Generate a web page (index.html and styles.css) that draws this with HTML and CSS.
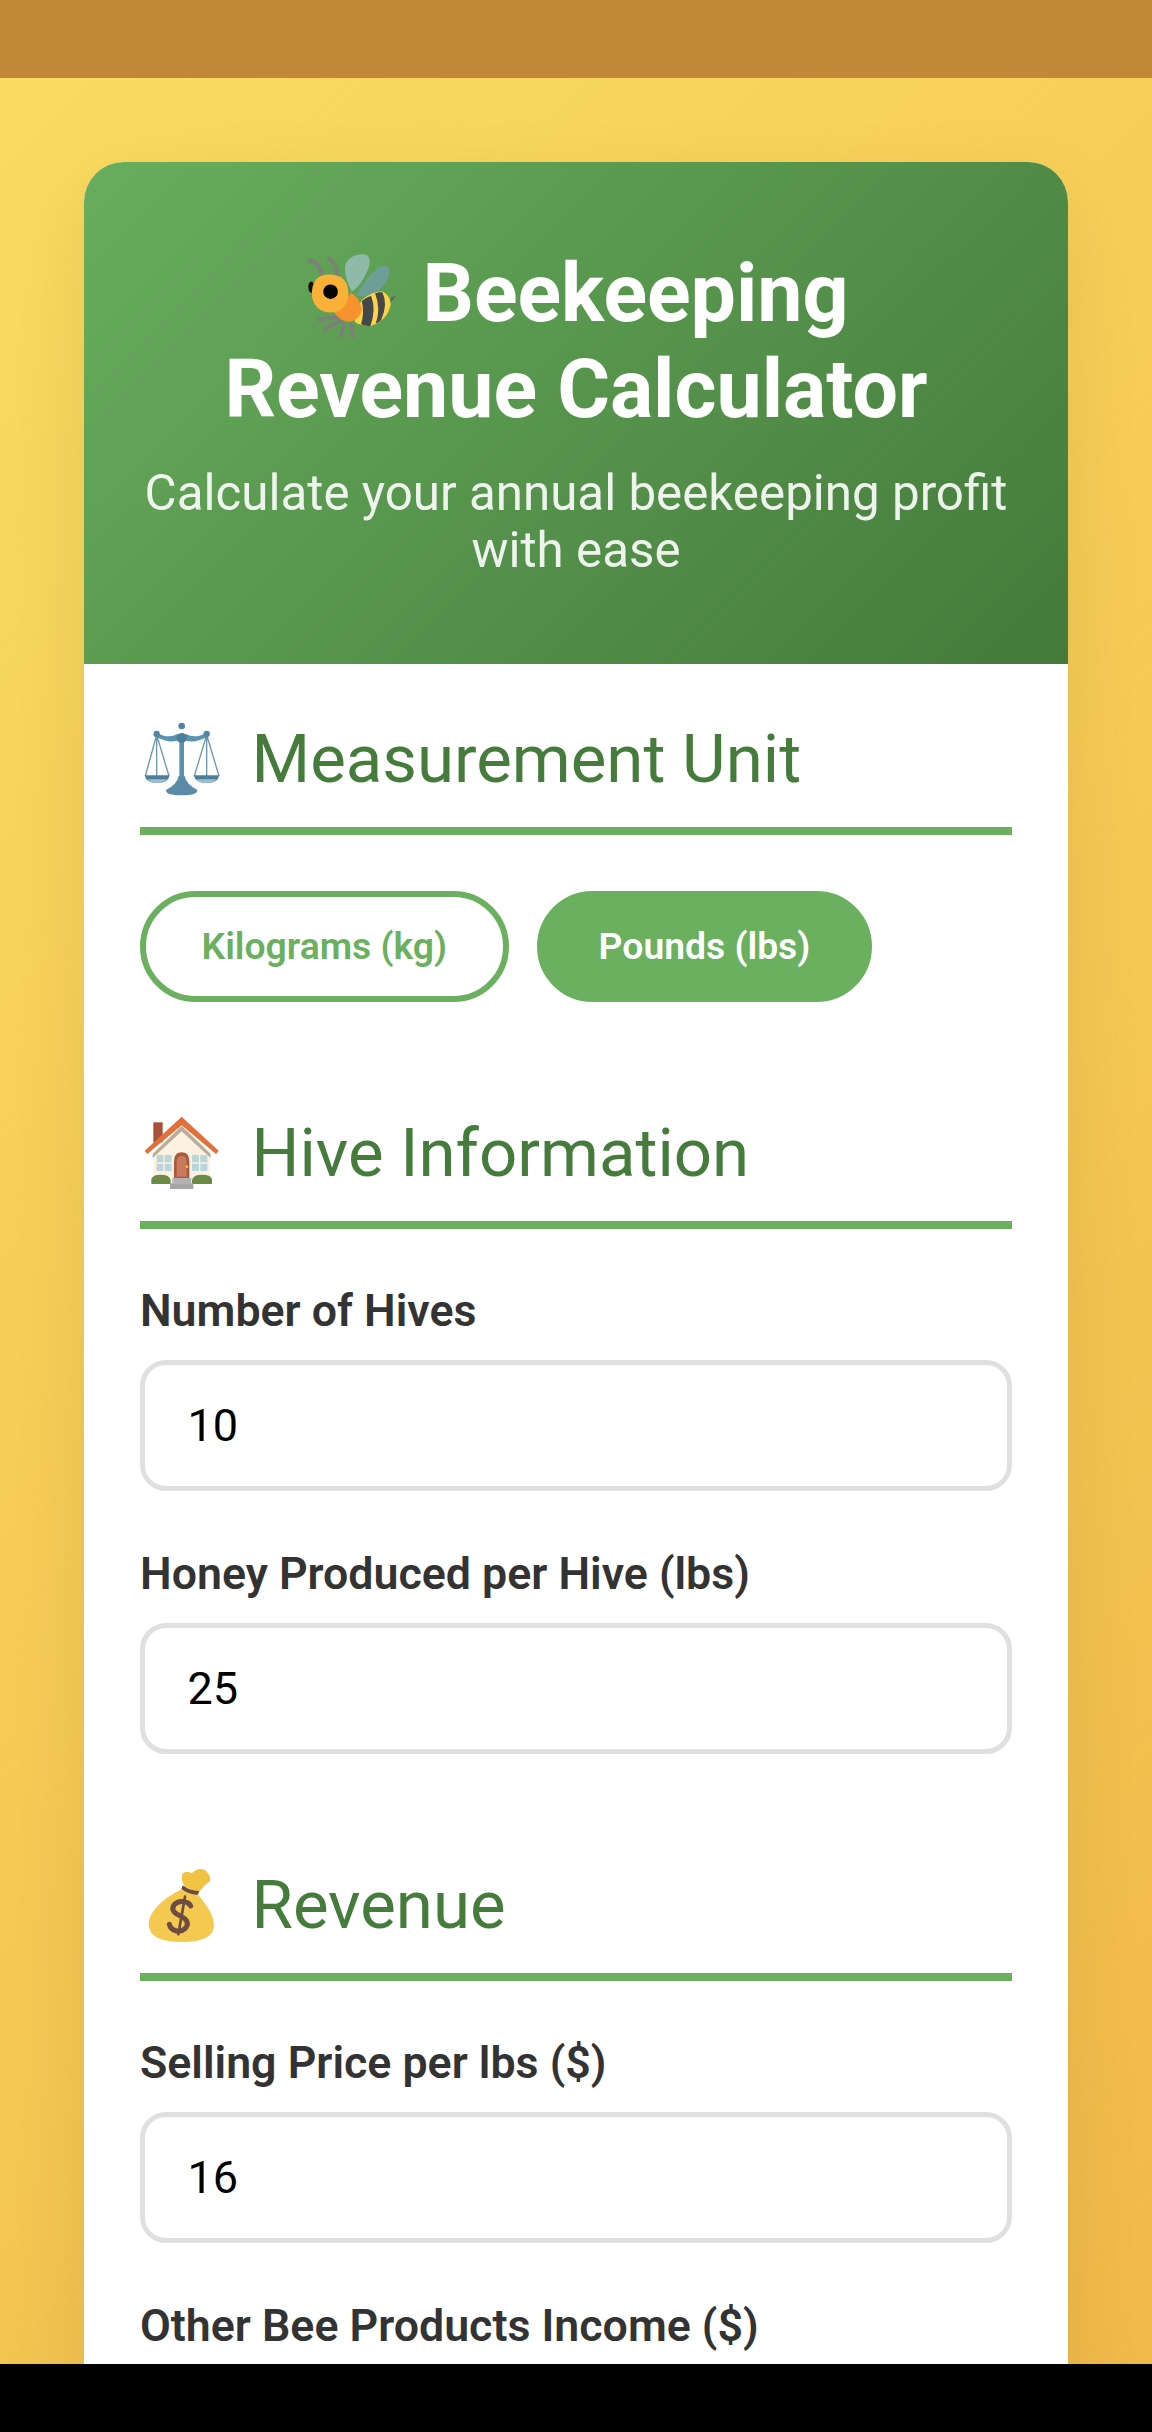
FILE: index.html
```html
<!DOCTYPE html>
<html lang="en">
<head>
<meta charset="utf-8">
<title>Beekeeping Revenue Calculator</title>
<link rel="stylesheet" href="styles.css">
</head>
<body>
<div class="status-bar"></div>
<main class="page">
  <div class="card">
    <header class="hero">
      <h1><svg class="emoji-bee" viewBox="80 60 280 270" aria-hidden="true">
        <g class="leg">
          <path d="M175 150 Q172 90 148 82"/><path d="M128 132 Q122 92 90 88"/>
          <path d="M172 260 L118 266"/><path d="M182 270 L135 296"/><path d="M195 276 L185 316"/><path d="M215 280 L222 316"/>
        </g>
        <path d="M218 182 Q190 130 200 95 Q225 62 265 72 Q280 90 262 125 Q245 165 218 182Z" fill="#8fb9a8"/>
        <path d="M232 195 Q250 150 300 108 Q325 98 332 118 Q330 160 290 185 Q260 200 232 195Z" fill="#6d9f96"/>
        <ellipse cx="96" cy="168" rx="9" ry="17" fill="#111"/>
        <path d="M335 200 L352 192 L335 216Z" fill="#5f6a68"/>
        <path d="M250 205 Q285 178 312 182 Q335 195 335 220 Q325 270 275 285 Q240 285 226 272 Q235 225 250 205Z" fill="#fdd344"/>
        <path d="M248 210 Q262 198 276 194 Q292 235 274 285 Q258 286 246 280 Q256 245 248 210Z" fill="#45484a"/>
        <path d="M288 187 Q300 182 310 184 Q328 220 306 268 Q298 275 290 278 Q306 235 288 187Z" fill="#45484a"/>
        <path d="M165 245 L215 186 Q240 195 248 235 Q245 262 215 272 Q185 275 165 245Z" fill="#f7932e"/>
        <path d="M98 195 Q95 130 150 130 Q205 130 208 185 Q205 245 150 245 Q105 240 98 195Z" fill="#fbb138"/>
        <circle cx="154" cy="182" r="22" fill="#050505"/>
      </svg> Beekeeping<br>Revenue Calculator</h1>
      <p>Calculate your annual beekeeping profit with ease</p>
    </header>
    <div class="content">
      <section class="section">
        <h2><svg class="emoji" viewBox="0 0 300 300" aria-hidden="true">
          <g stroke="#6d97ad" fill="none" stroke-width="4">
            <path d="M80 75 L46 198 M80 75 L117 198 M80 75 V198 M230 75 L193 198 M230 75 L267 198 M230 75 V198"/>
          </g>
          <path d="M148 85 H162 V205 H148Z" fill="#5b93ae"/>
          <path d="M80 68 Q115 88 142 72 H168 Q195 88 230 68 V82 Q195 100 168 92 H142 Q115 100 80 82Z" fill="#5b93ae"/>
          <circle cx="155" cy="48" r="10" fill="#4f86a3"/>
          <circle cx="155" cy="84" r="15" fill="#4a7f9c"/>
          <circle cx="80" cy="72" r="9.500" fill="#4f86a3"/>
          <circle cx="230" cy="72" r="9.500" fill="#4f86a3"/>
          <path d="M44 196 H119 Q115 219 81 219 Q48 219 44 196Z" fill="#4d7f99"/>
          <path d="M52 208 H111 Q100 219 81 219 Q62 219 52 208Z" fill="#9cc0d1"/>
          <path d="M191 196 H268 Q264 219 230 219 Q196 219 191 196Z" fill="#4d7f99"/>
          <path d="M199 208 H260 Q249 219 230 219 Q210 219 199 208Z" fill="#9cc0d1"/>
          <path d="M146 198 H164 Q168 222 202 240 Q204 256 155 256 Q106 256 108 240 Q142 222 146 198Z" fill="#5a8ca8"/>
        </svg>Measurement Unit</h2>
        <div class="unit-row">
          <button class="unit-btn" type="button">Kilograms (kg)</button>
          <button class="unit-btn active" type="button">Pounds (lbs)</button>
        </div>
      </section>
      <section class="section">
        <h2><svg class="emoji" viewBox="0 0 300 300" aria-hidden="true">
          <rect x="70" y="55" width="28" height="60" fill="#a5533b"/>
          <path d="M70 145 L155 62 L240 145 V230 H70Z" fill="#fdf1e0"/>
          <path d="M68 150 L155 66 L242 150 V162 L155 82 L68 162Z" fill="#b9ad9a"/>
          <path d="M44 140 L155 38 L266 140 L258 150 L155 64 L52 150Z" fill="#e2703a"/>
          <g fill="#b9d6dc"><rect x="80" y="153" width="45" height="48"/><rect x="186" y="153" width="46" height="48"/></g>
          <path d="M102 153 V201 M80 177 H125 M209 153 V201 M186 177 H232" stroke="#fdf1e0" stroke-width="4"/>
          <path d="M132 222 V172 Q132 145 155 145 Q178 145 178 172 V222Z" fill="#a85a3c"/>
          <path d="M140 218 V175 Q140 155 155 155 Q170 155 170 175 V218Z" fill="#c97a5c"/>
          <circle cx="171" cy="188" r="4" fill="#f4c430"/>
          <path d="M64 240 V225 Q68 212 92 212 Q118 212 122 228 V240Z" fill="#6b8a45"/>
          <path d="M186 240 V228 Q190 212 216 212 Q242 212 246 225 V240Z" fill="#6b8a45"/>
          <rect x="127" y="222" width="57" height="17" fill="#b4b2b4"/>
          <rect x="120" y="238" width="70" height="17" fill="#a6a5a8"/>
        </svg>Hive Information</h2>
        <div class="field"><label>Number of Hives</label><input type="text" value="10"></div>
        <div class="field"><label>Honey Produced per Hive (lbs)</label><input type="text" value="25"></div>
      </section>
      <section class="section">
        <h2><svg class="emoji" viewBox="0 0 300 300" aria-hidden="true">
          <path d="M165 92 Q150 70 158 52 Q172 42 185 52 Q205 32 225 42 Q245 60 240 75 Q222 88 205 110Z" fill="#f1c343"/>
          <path d="M158 88 Q182 106 208 105 L203 118 Q178 118 154 100Z" fill="#6d4c41"/>
          <path d="M154 100 Q180 118 204 116 Q252 170 252 210 Q250 258 155 258 Q56 258 56 205 Q58 150 154 100Z" fill="#f4c94f"/>
          <g class="dollar">
            <path d="M182 150 C175 135 145 130 132 147 C120 165 140 175 155 182 C172 190 178 205 165 218 C150 232 122 225 118 205"/>
            <path class="dollar-bar" d="M165 122 L145 235"/>
          </g>
        </svg>Revenue</h2>
        <div class="field"><label>Selling Price per lbs ($)</label><input type="text" value="16"></div>
        <div class="field"><label>Other Bee Products Income ($)</label><input type="text" value="0"></div>
      </section>
    </div>
  </div>
</main>
<div class="nav-bar"></div>
</body>
</html>
```
FILE: styles.css
```css
* { box-sizing: border-box; }
html, body { margin: 0; padding: 0; }
body {
  width: 1152px;
  height: 2432px;
  overflow: hidden;
  display: flex;
  flex-direction: column;
  font-family: Roboto, "Noto Sans", sans-serif;
  background: #000;
}
.status-bar { height: 78px; background: #c08837; flex: none; }
.nav-bar { height: 68px; background: #000; flex: none; }
.page {
  flex: 1;
  min-height: 0;
  overflow: hidden;
  padding: 84px 84px 0;
  background: linear-gradient(135deg, #fadb5f 0%, #f1b94a 100%);
}
.card {
  background: #fff;
  border-radius: 40px;
  box-shadow: 0 26px 80px rgba(0, 0, 0, 0.08);
  overflow: hidden;
}
.hero {
  height: 502px;
  padding: 84px 56px 0;
  text-align: center;
  color: #fff;
  background: linear-gradient(135deg, #68ae5e 0%, #447a3a 100%);
}
.hero h1 {
  margin: 0 0 26.500px;
  font-size: 80.700px;
  line-height: 96px;
  font-weight: 700;
}
.emoji-bee { width: 93px; height: 90px; vertical-align: -20px; margin: 0 3px; }
.leg { stroke: #7d8078; stroke-width: 12; fill: none; stroke-linecap: round; }
.hero p {
  margin: 0;
  font-size: 49.300px;
  line-height: 57.500px;
  font-weight: 400;
  opacity: 0.9;
}
.content { padding: 56px 56px 0; }
.section { margin-bottom: 112px; }
.section h2 {
  box-sizing: content-box;
  height: 79px;
  margin: 0 0 56px;
  padding-bottom: 28px;
  border-bottom: 8px solid #6ab05e;
  display: flex;
  align-items: center;
  font-size: 67.200px;
  line-height: 79px;
  font-weight: 400;
  color: #457c3c;
}
.emoji { width: 100px; height: 100px; margin: 0 21.500px 0 -10px; flex: none; }
.dollar { fill: none; stroke: #6d4c41; stroke-width: 15; stroke-linecap: round; }
.dollar-bar { stroke-width: 8; }
.unit-row { display: flex; gap: 28.500px; }
.unit-btn {
  height: 111px;
  padding: 0 55.500px 2px;
  border: 6px solid #6ab05e;
  border-radius: 56px;
  background: #fff;
  color: #6ab05e;
  font: 600 37.300px Roboto, sans-serif;
}
.unit-btn.active { background: #6ab05e; color: #fff; }
.field { margin-bottom: 57px; }
.field label {
  display: block;
  height: 75px;
  padding-top: 1px;
  font-size: 44.700px;
  line-height: 50px;
  font-weight: 600;
  color: #333;
}
.field input {
  display: block;
  width: 100%;
  height: 131px;
  padding: 0 42.500px;
  border: 5.500px solid #e0e0e0;
  border-radius: 26px;
  background: #fff;
  color: #000;
  font: 400 45px Roboto, sans-serif;
  outline: none;
}
```
